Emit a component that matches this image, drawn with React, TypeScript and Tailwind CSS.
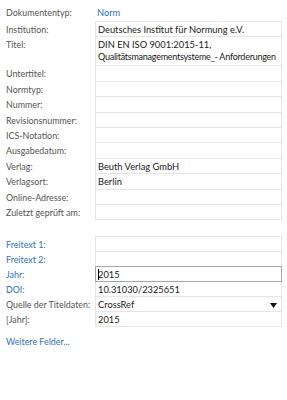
import { ReactNode } from 'react';

type Row = {
    label: string;
    value?: ReactNode;
    link?: boolean;
    tall?: boolean;
    focus?: boolean;
    select?: boolean;
};

const mainRows: Row[] = [
    { label: 'Institution:', value: 'Deutsches Institut für Normung e.V.' },
    {
        label: 'Titel:',
        value: (
            <>
                <div>DIN EN ISO 9001:2015-11,</div>
                <div className="text-[9px] tracking-[-0.25px]">Qualitätsmanagementsysteme_- Anforderungen</div>
            </>
        ),
        tall: true,
    },
    { label: 'Untertitel:' },
    { label: 'Normtyp:' },
    { label: 'Nummer:' },
    { label: 'Revisionsnummer:' },
    { label: 'ICS-Notation:' },
    { label: 'Ausgabedatum:' },
    { label: 'Verlag:', value: 'Beuth Verlag GmbH' },
    { label: 'Verlagsort:', value: 'Berlin' },
    { label: 'Online-Adresse:' },
    { label: 'Zuletzt geprüft am:' },
];

const extraRows: Row[] = [
    { label: 'Freitext 1:', link: true },
    { label: 'Freitext 2:', link: true },
    { label: 'Jahr:', value: '2015', link: true, focus: true },
    { label: 'DOI:', value: '10.31030/2325651', link: true },
    { label: 'Quelle der Titeldaten:', value: 'CrossRef', select: true },
    { label: '[Jahr]:', value: '2015' },
];

const FieldRow = ({ row, h }: { row: Row; h: string }) => (
    <div className="flex">
        <div
            className={`w-[95px] shrink-0 pl-[6px] pt-[2px] text-[8.9px] leading-[12px] whitespace-nowrap ${row.link ? 'text-[#2e74c0]' : 'text-[#555555]'}`}
        >
            {row.label}
        </div>
        <div
            className={`relative flex-1 -mt-px border px-[2px] text-[#1a1a1a] whitespace-nowrap overflow-hidden ${row.focus ? 'z-10 border-[#a6a6a6]' : 'border-[#e6e6e6]'} ${row.tall ? 'h-[30px] pt-[2px] leading-[11.5px]' : `${h} pt-[2px] leading-[12px]`}`}
        >
            {row.focus && <span className="absolute left-[2px] top-[2px] h-[11px] w-px bg-black" />}
            {row.value}
            {row.select && (
                <svg className="absolute right-[4px] top-[6px]" width="7" height="5" viewBox="0 0 7 5">
                    <path d="M0 0 H7 L3.5 5 Z" fill="#111" />
                </svg>
            )}
        </div>
    </div>
);

export default function App() {
    return (
        <div className="w-[287px] h-[400px] bg-white pr-[5px] pt-[6px] text-[9.3px] font-['Lato',sans-serif]">
            <div className="flex mb-[1px]">
                <div className="w-[95px] shrink-0 pl-[6px] text-[8.9px] leading-[14px] text-[#555555]">Dokumententyp:</div>
                <div className="pl-[2px] leading-[14px] text-[#2e74c0]">Norm</div>
            </div>
            <div className="pt-px">
                {mainRows.map((r) => (
                    <FieldRow key={r.label} row={r} h="h-[16.4px]" />
                ))}
            </div>
            <div className="pt-[17px]">
                {extraRows.map((r) => (
                    <FieldRow key={r.label} row={r} h="h-[16px]" />
                ))}
            </div>
            <div className="pl-[6px] pt-[8px] text-[8.9px] leading-[14px] text-[#2e74c0]">Weitere Felder...</div>
        </div>
    );
}
